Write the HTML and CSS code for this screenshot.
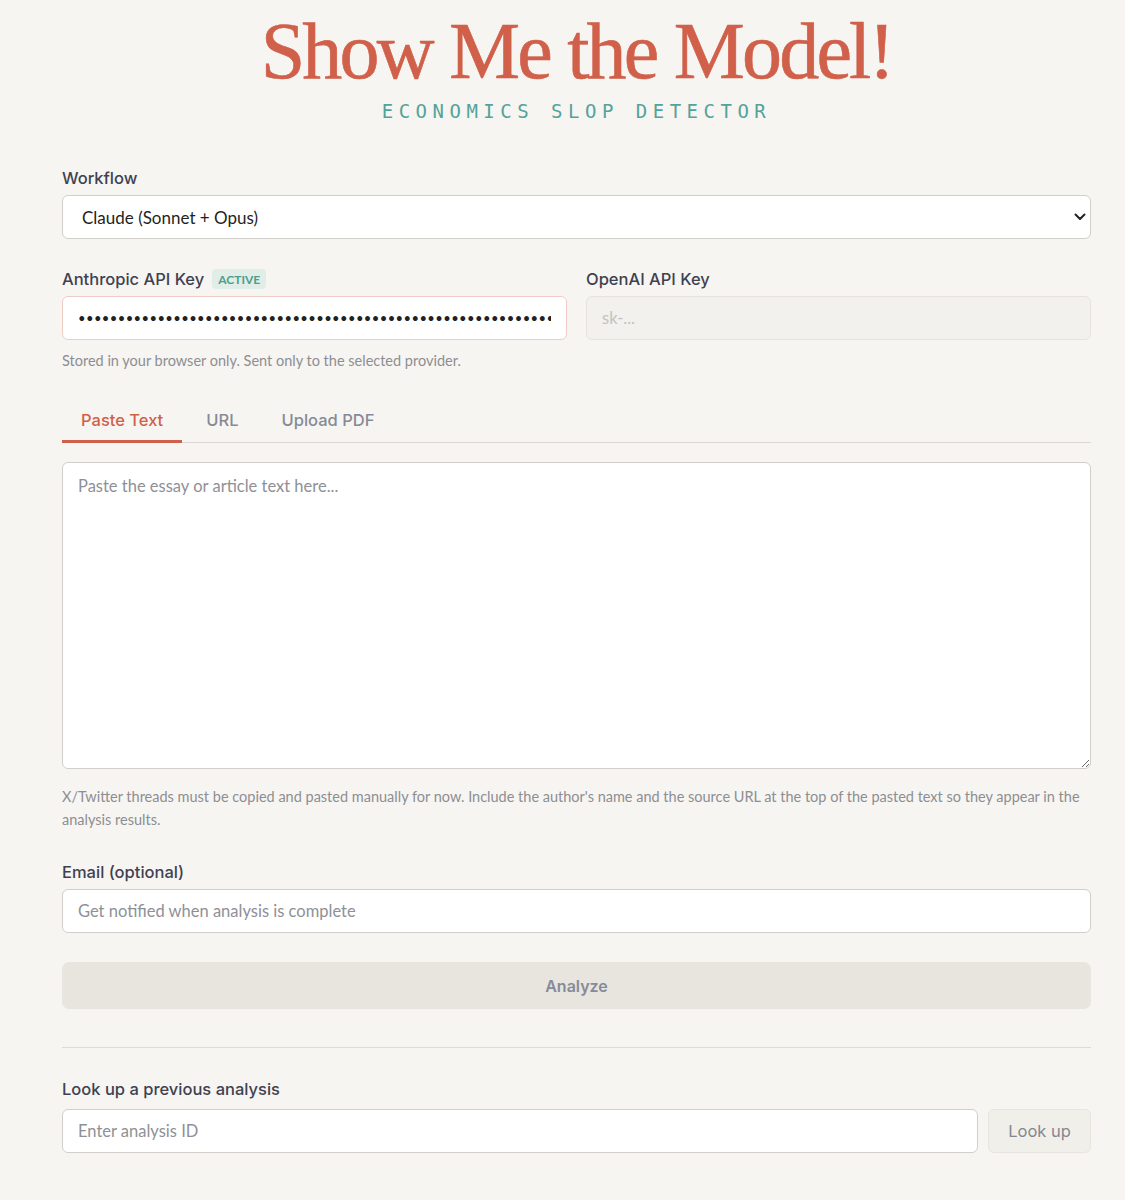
FILE: index.html
```html
<!DOCTYPE html>
<html>
<head>
    <title>Show Me the Model!</title>
    <link rel="stylesheet" href="styles.css">
</head>
<body>
    <div class="page">
        <header class="masthead">
            <h1 class="title">Show Me the Model!</h1>
            <p class="subtitle">Economics Slop Detector</p>
        </header>

        <form class="analyze-form">
            <div class="field">
                <label class="label" for="workflow">Workflow</label>
                <div class="select-wrap">
                    <select id="workflow" class="control select">
                        <option>Claude (Sonnet + Opus)</option>
                        <option>OpenAI</option>
                    </select>
                    <svg class="chevron" width="12" height="8" viewBox="0 0 12 8"><path d="M1.5 1.5 6 6l4.5-4.5" fill="none" stroke="#222" stroke-width="2" stroke-linecap="round" stroke-linejoin="round"/></svg>
                </div>
            </div>

            <div class="key-row">
                <div class="field">
                    <label class="label" for="anthropicKey">Anthropic API Key <span class="badge">Active</span></label>
                    <input type="password" id="anthropicKey" class="control key-active" value="sk-ant-api03-xxxxxxxxxxxxxxxxxxxxxxxxxxxxxxxxxxxxxxxxxxxxxxxxxxxxxxxxxxxxxxxxxxxxxxxxxxxxxx">
                </div>
                <div class="field">
                    <label class="label" for="openaiKey">OpenAI API Key</label>
                    <input type="password" id="openaiKey" class="control disabled" placeholder="sk-..." disabled>
                </div>
            </div>
            <p class="hint hint-keys">Stored in your browser only. Sent only to the selected provider.</p>

            <div class="tabs">
                <button type="button" class="tab active">Paste Text</button>
                <button type="button" class="tab">URL</button>
                <button type="button" class="tab">Upload PDF</button>
            </div>

            <textarea class="control text-input" placeholder="Paste the essay or article text here..."></textarea>
            <p class="hint hint-thread">X/Twitter threads must be copied and pasted manually for now. Include the author's name and the source URL at the top of the pasted text so they appear in the analysis results.</p>

            <div class="field email-field">
                <label class="label" for="email">Email (optional)</label>
                <input type="text" id="email" class="control" placeholder="Get notified when analysis is complete">
            </div>

            <button type="submit" class="analyze-btn" disabled>Analyze</button>
        </form>

        <hr class="divider">

        <div class="lookup">
            <label class="label lookup-label" for="lookupId">Look up a previous analysis</label>
            <div class="lookup-row">
                <input type="text" id="lookupId" class="control" placeholder="Enter analysis ID">
                <button type="button" class="lookup-btn">Look up</button>
            </div>
        </div>
    </div>
</body>
</html>
```

FILE: styles.css
```css
body {
    margin: 0;
    background-color: #f7f5f1;
    font-family: "Lato", "Noto Sans", sans-serif;
    color: #2b2b33;
}

.page {
    width: 1029px;
    margin-left: 62px;
    padding-bottom: 60px;
}

.masthead {
    text-align: center;
    padding-top: 8px;
}

.title {
    margin: 0;
    font-family: "Liberation Serif", "DejaVu Serif", serif;
    font-weight: 400;
    font-size: 80px;
    letter-spacing: -2.8px;
    line-height: 86px;
    color: #d0604a;
    -webkit-text-stroke: 0.6px #d0604a;
}

.subtitle {
    margin: 6px 0 0;
    font-family: "DejaVu Sans Mono", "Liberation Mono", monospace;
    font-size: 19px;
    letter-spacing: 5.5px;
    text-transform: uppercase;
    color: #53a39a;
}

.analyze-form {
    margin-top: 44px;
}

.field {
    display: flex;
    flex-direction: column;
}

.label {
    display: flex;
    align-items: center;
    gap: 8px;
    font-family: "Inter", "Noto Sans", sans-serif;
    font-size: 16.5px;
    font-weight: 500;
    color: #3f4150;
    height: 24px;
    margin-bottom: 5px;
}

.badge {
    font-family: "Lato", sans-serif;
    font-size: 12px;
    font-weight: 700;
    text-transform: uppercase;
    color: #4f9d8d;
    background-color: #e1eee8;
    border-radius: 4px;
    padding: 3px 6px 2px;
}

.control {
    box-sizing: border-box;
    width: 100%;
    height: 44px;
    padding: 0 15px;
    font-family: "Lato", "Noto Sans", sans-serif;
    font-size: 16.5px;
    color: #222;
    background-color: #fff;
    border: 1px solid #d2cfca;
    border-radius: 6px;
    outline: none;
}

.control::placeholder {
    color: #8f9096;
}

.select-wrap {
    position: relative;
}

.select {
    appearance: none;
    padding-left: 19px;
    font-size: 17px;
    color: #1f1f24;
}

.chevron {
    position: absolute;
    right: 5px;
    top: 18px;
}

.key-row {
    display: grid;
    grid-template-columns: 1fr 1fr;
    gap: 19px;
    margin-top: 28px;
}

.key-active {
    border-color: #f0cdc4;
    font-size: 13px;
    letter-spacing: 0.4px;
}

.disabled {
    background-color: #f2f1ed;
    border-color: #e6e3de;
}

.disabled::placeholder {
    color: #c4c3c0;
}

.hint {
    margin: 0;
    font-size: 14.5px;
    line-height: 23px;
    color: #8d8e93;
}

.hint-keys {
    margin-top: 9px;
}

.tabs {
    display: flex;
    margin-top: 30px;
    border-bottom: 1px solid #dcd9d4;
}

.tab {
    font-family: "Inter", "Noto Sans", sans-serif;
    font-size: 16.5px;
    font-weight: 500;
    color: #878a96;
    background: none;
    border: none;
    border-bottom: 3px solid transparent;
    padding: 8px 19px 10px 19px;
    margin-bottom: -1px;
    margin-right: 5px;
    cursor: pointer;
}

.tab.active {
    color: #d0604a;
    border-bottom-color: #d0604a;
}

.text-input {
    display: block;
    height: 307px;
    margin-top: 19px;
    padding: 13px 15px;
    resize: vertical;
    font-size: 16.5px;
}

.hint-thread {
    margin-top: 16px;
}

.email-field {
    margin-top: 29px;
}

.analyze-btn {
    display: block;
    width: 100%;
    height: 47px;
    margin-top: 29px;
    font-family: "Inter", "Noto Sans", sans-serif;
    font-size: 16px;
    font-weight: 600;
    color: #878b98;
    background-color: #e8e5df;
    border: none;
    border-radius: 7px;
}

.divider {
    margin: 38px 0 0;
    border: none;
    border-top: 1px solid #dedbd5;
}

.lookup {
    margin-top: 29px;
}

.lookup-label {
    margin-bottom: 8px;
}

.lookup-row {
    display: flex;
    gap: 10px;
}

.lookup-btn {
    flex: none;
    width: 103px;
    height: 44px;
    font-family: "Inter", "Noto Sans", sans-serif;
    font-size: 16.5px;
    color: #85878f;
    background-color: #f1efea;
    border: 1px solid #e8e5df;
    border-radius: 6px;
}
```
